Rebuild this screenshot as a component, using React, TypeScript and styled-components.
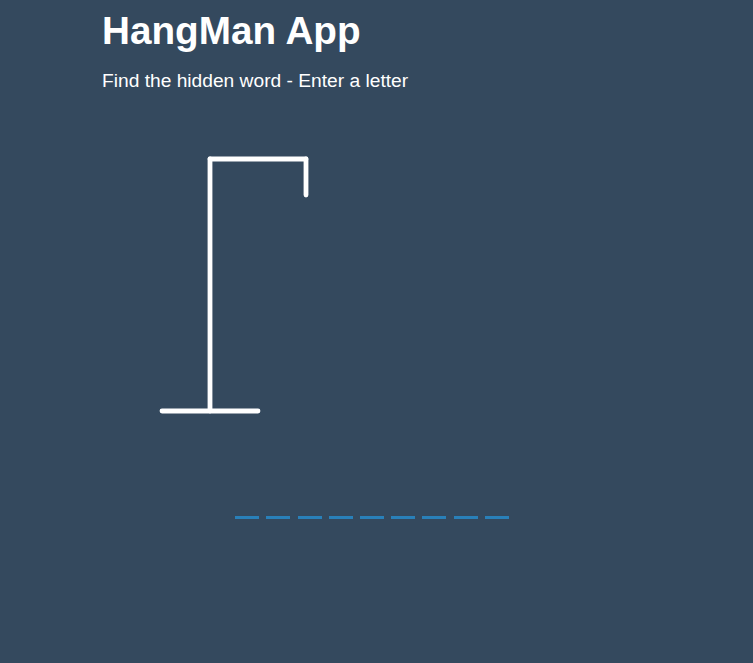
import React from "react";
import styled, { createGlobalStyle } from "styled-components";

const GlobalStyle = createGlobalStyle`
  html, body {
    margin: 0;
    padding: 0;
    background: #34495e;
    color: #ffffff;
    font-family: "Liberation Sans", Arial, sans-serif;
    height: 100%;
    overflow: hidden;
  }
  #root { min-height: 100%; }
`;

const Page = styled.div`
  display: flex;
  flex-direction: column;
  align-items: flex-start;
  padding-left: 102px;
  min-height: 663px;
  box-sizing: border-box;
`;

const Title = styled.h1`
  margin: 8.6px 0 0;
  font-size: 38.7px;
  line-height: 44px;
  font-weight: 700;
`;

const Subtitle = styled.p`
  margin: 17.75px 0 0;
  font-size: 19.2px;
  line-height: 22px;
`;

const GameContainer = styled.div`
  box-sizing: border-box;
  margin-top: 18.4px;
  width: 540px;
  height: 420px;
  padding: 24px 36px 12px;
  display: flex;
  flex-direction: column;
`;

const Figure = styled.svg`
  display: block;
  fill: transparent;
  stroke: #ffffff;
  stroke-width: 4px;
  stroke-linecap: round;
`;

const Word = styled.div`
  margin-top: auto;
  align-self: center;
  display: flex;
`;

const Letter = styled.span`
  box-sizing: content-box;
  display: inline-flex;
  align-items: center;
  justify-content: center;
  width: 24px;
  height: 60px;
  margin: 0 3.6px;
  border-bottom: 3.6px solid #2980b9;
  font-size: 36px;
`;

const letters = Array.from({ length: 9 }, (_, i) => i);

export default function App() {
  return (
    <>
      <GlobalStyle />
      <Page>
        <Title>HangMan App</Title>
        <Subtitle>Find the hidden word - Enter a letter</Subtitle>
        <GameContainer>
          <Figure width="240" height="300" viewBox="0 0 200 250">
            <line x1="60" y1="20" x2="140" y2="20" />
            <line x1="140" y1="20" x2="140" y2="50" />
            <line x1="60" y1="20" x2="60" y2="230" />
            <line x1="20" y1="230" x2="100" y2="230" />
          </Figure>
          <Word>
            {letters.map((i) => (
              <Letter key={i} />
            ))}
          </Word>
        </GameContainer>
      </Page>
    </>
  );
}
